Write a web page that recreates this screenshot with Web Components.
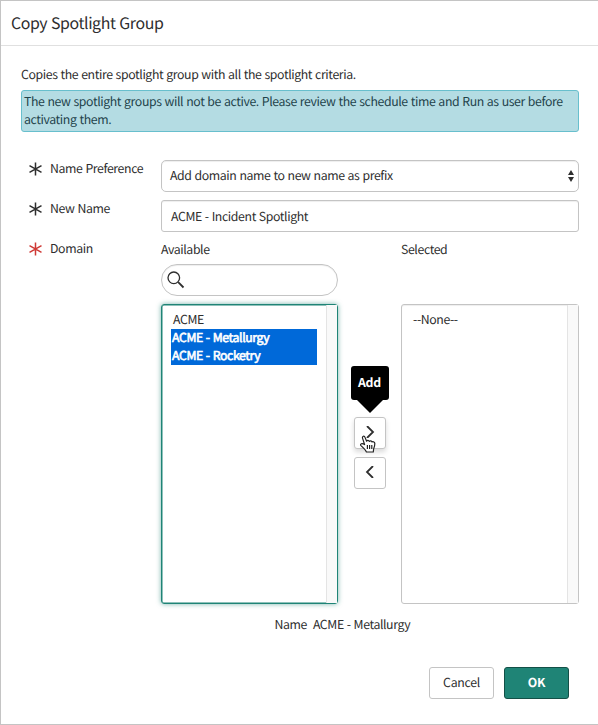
<!DOCTYPE html>
<html lang="en">

<head>
	<meta charset="UTF-8">
	<meta name="viewport" content="width=device-width, initial-scale=1.0">
	<title>Copy Spotlight Group</title>
	<style>
		body {
			margin: 0;
			background: #fff;
			color: #2e2e2e;
			font: 12.3px/18px "Noto Sans CJK SC", "Noto Sans", sans-serif;
			letter-spacing: -.39px;
			word-spacing: .6px;
			text-rendering: geometricPrecision;
		}
	</style>
</head>

<body>
	<spotlight-dialog>
		<span slot="title">Copy Spotlight Group</span>
		<info-message>
			<span slot="intro">Copies the entire spotlight group with all the spotlight criteria.</span>
			The new spotlight groups will not be active. Please review the schedule time and Run as user before activating them.
		</info-message>
		<form-row label="Name Preference"><select-box>Add domain name to new name as prefix</select-box></form-row>
		<form-row label="New Name"><text-box>ACME - Incident Spotlight</text-box></form-row>
		<form-row label="Domain" required>
			<slush-bucket>
				<list-box slot="available" focused>
					<list-option>ACME</list-option>
					<list-option selected>ACME - Metallurgy</list-option>
					<list-option selected>ACME - Rocketry</list-option>
				</list-box>
				<list-box slot="selected">
					<list-option>--None--</list-option>
				</list-box>
				<span slot="summary">Name&nbsp; ACME - Metallurgy</span>
			</slush-bucket>
		</form-row>
		<push-button slot="footer">Cancel</push-button>
		<push-button slot="footer" primary>OK</push-button>
	</spotlight-dialog>

	<template id="dialog-template">
		<style>
			:host {
				display: flex;
				flex-direction: column;
				box-sizing: border-box;
				width: 598px;
				height: 725px;
				border: 1px solid #c4c4c4;
				border-right: 0;
			}

			header {
				box-sizing: border-box;
				height: 45px;
				padding: 11px 10px;
				border-bottom: 1px solid #e0e0e0;
				font-size: 15.9px;
				letter-spacing: -.4px;
				line-height: 22px;
			}

			main {
				flex: 1;
				padding: 19px 19px 0 20px;
			}

			footer {
				display: flex;
				justify-content: flex-end;
				gap: 10px;
				padding: 0 29px 25px 0;
			}
		</style>
		<header><slot name="title"></slot></header>
		<main><slot></slot></main>
		<footer><slot name="footer"></slot></footer>
	</template>

	<template id="message-template">
		<style>
			:host {
				display: block;
				margin-bottom: 27px;
			}

			.intro {
				margin-bottom: 7px;
			}

			.box {
				padding: 1px 2px 3px;
				border: 1px solid #68bfcd;
				border-radius: 3px;
				background: #b4dce3;
				color: #1f434b;
			}
		</style>
		<div class="intro"><slot name="intro"></slot></div>
		<div class="box"><slot></slot></div>
	</template>

	<template id="row-template">
		<style>
			:host {
				display: grid;
				grid-template-columns: 140px 1fr;
				align-items: start;
				margin-bottom: 8px;
			}

			.label {
				display: flex;
				align-items: center;
				gap: 8px;
				padding-left: 8px;
			}

			svg {
				margin-top: 2px;
				stroke: #2e2e2e;
			}

			:host([required]) svg {
				stroke: #cf3a36;
			}

			slot {
				display: block;
				padding-top: 1px;
			}
		</style>
		<div class="label">
			<svg width="13" height="14" viewBox="0 0 13 14" fill="none" stroke-width="1.5">
				<path d="M6.5 .5v13M.5 3.6l12 6.8M12.5 3.6l-12 6.8" />
			</svg>
			<span></span>
		</div>
		<slot></slot>
	</template>

	<template id="select-template">
		<style>
			:host {
				display: flex;
				align-items: center;
				justify-content: space-between;
				box-sizing: border-box;
				height: 32px;
				margin-bottom: -1px;
				padding: 0 4px 2px 8px;
				border: 1px solid #c4c4c4;
				border-radius: 5px;
				box-shadow: inset 0 1px 1px #00000012;
			}

			svg {
				margin-top: 2px;
			}
		</style>
		<slot></slot>
		<svg width="6" height="12" viewBox="0 0 6 12" fill="#2e2e2e">
			<path d="M3 0l3 5H0zM3 12L0 7h6z" />
		</svg>
	</template>

	<template id="text-template">
		<style>
			:host {
				display: block;
				box-sizing: border-box;
				height: 32px;
				margin-bottom: -1px;
				padding: 6px 9px;
				border: 1px solid #c4c4c4;
				border-radius: 3px;
				box-shadow: inset 0 1px 1px #00000012;
			}
		</style>
		<slot></slot>
	</template>

	<template id="bucket-template">
		<style>
			:host {
				display: block;
			}

			.lists {
				display: grid;
				grid-template-columns: 177px 63px 178px;
				grid-template-rows: 24px 32px 308px;
			}

			.search {
				grid-row: 2;
				display: flex;
				align-items: center;
				box-sizing: border-box;
				padding-left: 5px;
				border: 1px solid #c4c4c4;
				border-radius: 16px;
				box-shadow: inset 0 1px 1px #00000012;
			}

			.caption:nth-of-type(2) {
				grid-column: 3;
			}

			slot[name=available],
			slot[name=selected],
			.moves {
				grid-row: 3;
			}

			slot[name=available],
			slot[name=selected] {
				display: block;
				padding-top: 8px;
			}

			.moves {
				display: flex;
				flex-direction: column;
				align-items: center;
				gap: 8px;
				padding-top: 121px;
			}

			.summary {
				margin-top: 11px;
				padding-left: 113.5px;
			}
		</style>
		<div class="lists">
			<div class="caption">Available</div>
			<div class="caption">Selected</div>
			<div class="search">
				<svg width="18" height="18" viewBox="0 0 18 18" fill="none" stroke="#2e2e2e">
					<circle cx="6.8" cy="6.8" r="5.8" stroke-width="1.3" />
					<path d="M11.2 11.2l5.3 5.3" stroke-width="1.8" />
				</svg>
			</div>
			<slot name="available"></slot>
			<div class="moves">
				<move-button tip="Add" icon="M8 0l6 6-6 6"></move-button>
				<move-button icon="M14 0L8 6l6 6"></move-button>
			</div>
			<slot name="selected"></slot>
		</div>
		<div class="summary"><slot name="summary"></slot></div>
	</template>

	<template id="move-template">
		<style>
			:host {
				position: relative;
				display: flex;
				align-items: center;
				justify-content: center;
				box-sizing: border-box;
				width: 32px;
				height: 32px;
				padding-bottom: 2px;
				border: 1px solid #c4c4c4;
				border-radius: 3px;
				background: #fff;
			}

			:host([tip]) {
				box-shadow: 0 3px 5px #00000026;
			}

			.tip,
			.cursor {
				display: none;
			}

			:host([tip]) .tip {
				display: block;
				position: absolute;
				left: -4px;
				top: -52px;
				width: 38px;
				height: 34px;
				border-radius: 3px;
				background: #000;
				color: #fff;
				font-weight: bold;
				letter-spacing: -.2px;
				line-height: 33px;
				text-align: center;
			}

			.tip::after {
				content: "";
				position: absolute;
				left: 5px;
				top: 33px;
				border: 14px solid transparent;
				border-top-color: #000;
				border-bottom: 0;
			}

			:host([tip]) .cursor {
				display: block;
				position: absolute;
				left: 5px;
				top: 17px;
			}
		</style>
		<svg class="icon" width="22" height="12" viewBox="0 0 22 12" fill="none" stroke="#2e2e2e" stroke-width="1.8">
			<path />
		</svg>
		<div class="tip"></div>
		<svg class="cursor" width="16" height="18" viewBox="0 0 16 18" fill="#fff" stroke="#222" stroke-width="1.2" stroke-linejoin="round">
			<path d="M4.6 9.6L2.6 3.4C1.9 1 4.3.3 5.1 2.5L6.6 6.2C7.2 5 8.8 5.1 9.4 6.4c.8-.9 2.1-.7 2.6.5 1.4-.5 2.7.1 2.8 1.5.1 2.6-.4 3.9-1.2 5.6l-.3 3H6.4C5.6 14.8 3.8 13.2.9 10.6-.2 8.7 2 7.8 4.600 9.600z" />
			<path d="M7.400 10v4M9.600 10v4M11.800 10v4" fill="none" />
		</svg>
	</template>

	<template id="list-template">
		<style>
			:host {
				display: grid;
				grid-template-columns: 1fr 11px;
				box-sizing: border-box;
				height: 300px;
				border: 1px solid #c4c4c4;
				border-radius: 3px;
				box-shadow: inset 0 1px 1px #00000012;
			}

			:host([focused]) {
				border-color: #1f8476;
				box-shadow: 0 0 5px #1f847699, inset 0 0 0 .5px #1f8476;
			}

			.options {
				padding: 6px 9px;
			}

			.track {
				border-left: 1px solid #e4e4e4;
				background: #f9f9f9;
			}
		</style>
		<div class="options"><slot></slot></div>
		<div class="track"></div>
	</template>

	<template id="option-template">
		<style>
			:host {
				display: block;
				padding-left: 2px;
				height: 18px;
				line-height: 16px;
			}

			:host([selected]) {
				padding-left: 1px;
				background: #0069d9;
				color: #fff;
				-webkit-text-stroke: .6px #fff;
			}
		</style>
		<slot></slot>
	</template>

	<template id="button-template">
		<style>
			:host {
				box-sizing: border-box;
				width: 65px;
				height: 32px;
				border: 1px solid #c4c4c4;
				border-radius: 3px;
				letter-spacing: -.3px;
				line-height: 28px;
				text-align: center;
			}

			:host([primary]) {
				border-color: #135047;
				background: #1f8476;
				color: #fff;
				font-weight: bold;
			}
		</style>
		<slot></slot>
	</template>

	<script>
		// Base class: clones the element's template into its shadow root
		class TemplateElement extends HTMLElement {
			connectedCallback() {
				if (this.shadowRoot) return;
				this.attachShadow({ mode: 'open' });
				const template = document.getElementById(this.constructor.template);
				this.shadowRoot.append(template.content.cloneNode(true));
				this.render();
			}
			render() { }
		}

		class FormRow extends TemplateElement {
			static template = 'row-template';
			render() {
				this.shadowRoot.querySelector('.label span').textContent = this.getAttribute('label');
			}
		}

		class MoveButton extends TemplateElement {
			static template = 'move-template';
			render() {
				this.shadowRoot.querySelector('.icon path').setAttribute('d', this.getAttribute('icon'));
				this.shadowRoot.querySelector('.tip').textContent = this.getAttribute('tip') || '';
			}
		}

		customElements.define('spotlight-dialog', class extends TemplateElement { static template = 'dialog-template'; });
		customElements.define('info-message', class extends TemplateElement { static template = 'message-template'; });
		customElements.define('form-row', FormRow);
		customElements.define('select-box', class extends TemplateElement { static template = 'select-template'; });
		customElements.define('text-box', class extends TemplateElement { static template = 'text-template'; });
		customElements.define('move-button', MoveButton);
		customElements.define('slush-bucket', class extends TemplateElement { static template = 'bucket-template'; });
		customElements.define('list-box', class extends TemplateElement { static template = 'list-template'; });
		customElements.define('list-option', class extends TemplateElement { static template = 'option-template'; });
		customElements.define('push-button', class extends TemplateElement { static template = 'button-template'; });
	</script>
</body>

</html>
